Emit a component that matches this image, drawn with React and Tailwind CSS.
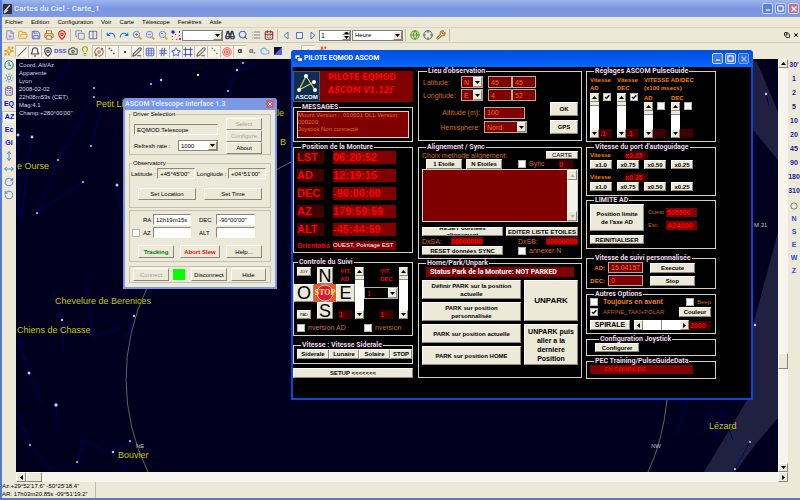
import React, { useState } from 'react';
import {
  FilePlus, FolderOpen, Save, Printer, MapPin, Copy, Columns2, Undo, Redo, ZoomIn, ZoomOut, Search,
  Binoculars, List, CalendarDays, Globe, Crosshair, Wrench, Sparkles, Camera, Lightbulb, Grid3x3,
  Cloud, Orbit, Clock, Sun, MoveVertical, MoveHorizontal, RotateCw, RotateCcw, ClipboardList, PenLine,
  Bell, Dot, Slash, Target, Frame, Star, Minus, Square, X, Hash,
} from 'lucide-react';

const menus = ['Fichier', 'Edition', 'Configuration', 'Voir', 'Carte', 'Télescope', 'Fenêtres', 'Aide'];

const positions = [
  ['LST', '06:20:52'],
  ['AD', '12:19:15'],
  ['DEC', '-90:00:00'],
  ['AZ', '179:59:59'],
  ['ALT', '-45:44:59'],
];

const skyInfo = ['Coord. Alt/Az', 'Apparente', 'Lyon', '2008-02-02', '22h08m53s (CET)', 'Mag:4.1', 'Champ:+280°00\'00"'];

const skyLabels = [
  [96, 107, 'Petit Li'],
  [17, 169, 'e Ourse'],
  [55, 304, 'Chevelure de Berenices'],
  [17, 333, 'Chiens de Chasse'],
  [118, 458, 'Bouvier'],
  [709, 429, 'Lézard'],
  [277, 116, 'le'],
  [280, 145, 'B'],
];

const stars = [
  [94, 88, 1], [94, 97, 1], [18, 135, 1.4], [32, 137, 1.4], [91, 146, 1], [58, 160, 1], [83, 182, 1],
  [117, 185, 1.5], [37, 213, 1], [161, 80, 1.2], [151, 84, 1], [237, 70, 1.2], [243, 63, 1], [228, 91, 1],
  [62, 320, 1.2], [134, 316, 1.2], [29, 373, 1.5], [56, 405, 1.7], [30, 445, 1], [113, 452, 1.2],
  [130, 441, 1], [77, 462, 1], [755, 325, 1.2], [750, 442, 1], [735, 469, 1], [766, 94, 1.2],
];

const lines = [
  '94,97 58,160 37,213', '117,89 102,105 91,146', '17,135 32,137 21,218', '37,213 83,182', '18,135 18,215',
  '70,60 48,98', '117,185 122,220', '161,80 151,84 139,96', '243,63 237,70 228,91 226,98',
  '237,70 250,68 256,62', '62,320 63,352', '62,320 53,290', '86,278 92,337 120,328', '29,373 42,404',
  '18,340 29,373', '56,405 58,425', '17,412 30,445 52,471', '134,316 126,340', '77,462 83,441 113,452 127,471',
  '113,452 130,441', '766,94 769,106', '676,436 688,400', '702,434 712,414 722,410 716,438 726,420 733,440', '735,469 750,442',
];

const rightScale = ["30'", '1', '2', '5', '10', '20', '45', '90', '180', '310'];

const Arrow = ({ dir = 'down' }) => {
  const shapes = { down: '0,1 5,1 2.5,4', up: '0,4 5,4 2.5,1', left: '4,0 4,5 1,2.5', right: '1,0 1,5 4,2.5' };
  return (
    <svg viewBox="0 0 5 5" className="w-[5px] h-[5px]" aria-hidden="true">
      <polygon points={shapes[dir]} fill="currentColor" />
    </svg>
  );
};

const Btn = ({ children, className = '', ...rest }) => (
  <button
    type="button"
    className={`flex items-center justify-center text-center bg-[#ece9d8] text-black border border-t-white border-l-white border-r-[#8c897c] border-b-[#8c897c] whitespace-nowrap ${className}`}
    {...rest}
  >
    {children}
  </button>
);

const eqLegend = "ml-1 text-[#f0d8f0] text-[7px] font-bold font-['Roboto','Liberation_Sans',sans-serif]";

const Group = ({ title, className = '', legendClass = eqLegend, children }) => (
  <fieldset className={`min-w-0 border ${className}`}>
    <legend className={`h-2 px-px leading-[8px] whitespace-nowrap ${legendClass}`}>{title}</legend>
    {children}
  </fieldset>
);

const Tick = ({ label, checked = false, textClass = '', name }) => {
  const [on, setOn] = useState(checked);
  return (
    <label className="flex items-center gap-[3px] leading-[8px] whitespace-nowrap">
      <span className="relative flex">
        <input
          type="checkbox"
          aria-label={name}
          checked={on}
          onChange={() => setOn(!on)}
          className="appearance-none w-[8px] h-[8px] bg-white border border-[#b8b4a8]"
        />
        {on && (
          <svg viewBox="0 0 8 8" className="absolute inset-0 w-2 h-2 pointer-events-none">
            <path d="M2 4 L3.5 5.5 L6.3 2.3" fill="none" stroke="black" strokeWidth="1.4" />
          </svg>
        )}
      </span>
      {label && <span className={textClass}>{label}</span>}
    </label>
  );
};

const Combo = ({ value, name, className = '', selectClass = '' }) => (
  <span className={`relative flex ${className}`}>
    <select aria-label={name} defaultValue={value} className={`appearance-none w-full h-full pl-[2px] leading-none ${selectClass}`}>
      <option value={value}>{value}</option>
    </select>
    <span className="absolute right-px top-px bottom-px w-[9px] bg-[#ece9d8] text-black border border-white border-r-[#8c897c] border-b-[#8c897c] flex items-center justify-center pointer-events-none">
      <Arrow />
    </span>
  </span>
);

const ScrollV = ({ className = '' }) => (
  <div className={`flex flex-col w-[9px] shrink-0 bg-white ${className}`}>
    <Btn className="h-[9px]" aria-label="Haut"><Arrow dir="up" /></Btn>
    <div className="h-1 bg-[#ece9d8] border-b border-[#8c897c]" />
    <div className="flex-1" />
    <Btn className="h-[9px]" aria-label="Bas"><Arrow /></Btn>
  </div>
);

const RedInput = ({ value, name, className = '' }) => (
  <input
    aria-label={name}
    defaultValue={value}
    className={`min-w-0 bg-[#800000] text-[#f07010] border border-[#b8a8a0] px-[2px] text-[7px] leading-none ${className}`}
  />
);

const Readout = ({ children, className = 'bg-[#400000]' }) => (
  <output className={`block text-[#ff0000] font-bold text-[7px] leading-[9px] whitespace-nowrap ${className}`}>{children}</output>
);

const Tool = ({ icon: Icon, color = 'text-[#3050c0]', text, label, pressed }) => (
  <button
    type="button"
    aria-label={label}
    className={`h-3 flex flex-1 items-center justify-center text-[7px] font-bold ${color} ${pressed ? 'bg-[#f6f4ea] border-l border-t border-[#c4c0ac]' : ''}`}
  >
    {Icon ? <Icon size={10} strokeWidth={2.5} /> : text}
  </button>
);

const Sep = () => <span className="w-px h-3 mx-[2px] bg-[#c0bca8]" />;

const TopBar = () => (
  <header>
    <div className="h-[17px] flex items-center gap-[2px] pl-px pr-px bg-gradient-to-b from-[#9db4ee] via-[#7a96df] to-[#7d9ae6]">
      <svg viewBox="0 0 9 10" className="w-[9px] h-[10px]">
        <rect width="9" height="10" fill="#303030" />
        <path d="M1 8 L7 1 M1 9 L5 6" stroke="#d8d8d8" strokeWidth="1.3" />
      </svg>
      <h1 className="flex-1 font-['Roboto','Liberation_Sans',sans-serif] text-[8px] leading-none font-bold text-[#dce6ff]">Cartes du Ciel - Carte_1</h1>
      <WindowButtons closeClass="bg-[#c07080]" baseClass="bg-[#5a80e0]" />
    </div>
    <nav className="h-[11px] flex items-center pl-[2px] gap-[6px] text-[6px] leading-none border-b border-[#d8d4c0]">
      {menus.map((m) => (
        <a key={m} href="#" className="px-px">{m}</a>
      ))}
    </nav>
    <div className="h-[15px] flex items-center pl-px border-b border-[#d0ccb8]">
      <div className="flex w-[65px]">
        <Tool icon={FilePlus} label="Nouveau" color="text-[#9090c8]" />
        <Tool icon={FolderOpen} label="Ouvrir" color="text-[#e0a820]" />
        <Tool icon={Save} label="Enregistrer" color="text-[#6070d0]" />
        <Tool icon={Printer} label="Imprimer" color="text-[#b08030]" />
        <Tool icon={MapPin} label="Position" color="text-[#d01010]" />
      </div>
      <Sep />
      <div className="flex w-[26px]">
        <Tool icon={Copy} label="Copier" color="text-[#8088b8]" />
        <Tool icon={Columns2} label="Colonnes" color="text-[#6878b0]" />
      </div>
      <Sep />
      <div className="flex w-[78px]">
        <Tool icon={Undo} label="Annuler" color="text-[#1068d0]" />
        <Tool icon={Redo} label="Refaire" color="text-[#1068d0]" />
        {['M3 4.5h3M4.5 3v3', 'M3 4.5h3', 'M3 3.5h2'].map((mark) => (
          <button key={mark} type="button" aria-label="Zoom" className="flex-1 flex items-center justify-center">
            <svg viewBox="0 0 10 10" className="w-[10px] h-[10px]">
              <circle cx="4.5" cy="4.5" r="3.2" fill="#d8e4ff" stroke="#8088c0" strokeWidth="1" />
              <path d={mark} stroke="#6070c0" strokeWidth="0.8" />
              <path d="M7 7 L9.3 9.3" stroke="#e0a020" strokeWidth="1.8" />
            </svg>
          </button>
        ))}
        <button type="button" aria-label="Champ" className="flex-1 flex items-center justify-center">
          <svg viewBox="0 0 10 10" className="w-[10px] h-[10px]">
            <circle cx="2" cy="2" r="1.7" fill="#2020ff" />
            <path d="M8 1h1v2H8z M8 5h1v1H8z" fill="#2020ff" />
            <path d="M1 6h1v1H1z M4 4h1v1H4z M1 9h1v1H1z M5 9h1v1H5z M8 8h2v2H8z" fill="#ff2060" />
          </svg>
        </button>
      </div>
      <Combo name="Recherche" value="" className="w-[41px] h-[11px]" selectClass="bg-white border border-[#808080]" />
      <div className="flex w-[52px]">
        <Tool icon={Binoculars} label="Chercher" color="text-[#182048]" />
        <Tool icon={Search} label="Recherche avancée" color="text-[#4060e0]" />
        <Tool icon={List} label="Liste" color="text-[#808080]" />
        <Tool icon={CalendarDays} label="Calendrier" color="text-[#803030]" />
      </div>
      <Sep />
      <div className="flex w-[39px]">
        {['6,1 6,8 2,4.5', '1.5,1.5 7.5,1.5 7.5,7.5 1.5,7.5', '3,1 3,8 7,4.5'].map((p) => (
          <button key={p} type="button" aria-label="Temps" className="flex-1 flex items-center justify-center">
            <svg viewBox="0 0 9 9" className="w-[9px] h-[9px]"><polygon points={p} fill="#f0f4ff" stroke="#5060c0" strokeWidth="0.9" /></svg>
          </button>
        ))}
      </div>
      <div className="flex h-[11px] w-[32px] bg-white border border-[#808080]">
        <input aria-label="Pas" defaultValue="1" className="flex-1 min-w-0 pl-px text-[7px] leading-none" />
        <div className="flex flex-col w-2">
          <Btn className="flex-1 min-h-0 overflow-hidden" aria-label="Plus"><Arrow dir="up" /></Btn>
          <Btn className="flex-1 min-h-0 overflow-hidden" aria-label="Moins"><Arrow /></Btn>
        </div>
      </div>
      <Combo name="Unité" value="Heure" className="w-[51px] h-[11px] ml-px" selectClass="bg-white border border-[#808080] text-[6px]" />
      <Sep />
      <div className="flex w-[39px]">
        <Tool icon={Globe} label="Connexion" color="text-[#50a020]" />
        <Tool icon={Crosshair} label="Centrer" color="text-[#606060]" />
        <Tool icon={Wrench} label="Outils" color="text-[#b07010]" />
      </div>
      <Sep />
      <div className="ml-auto flex gap-[3px] pr-px text-black">
        <Copy size={6} strokeWidth={3} />
        <X size={6} strokeWidth={4} />
      </div>
    </div>
    <div className="h-4 flex items-center pl-px">
      <div className="flex w-[51px]">
        <Tool icon={Sparkles} label="Etoiles" color="text-[#e8a020]" />
        <Tool icon={Slash} label="Comètes" color="text-[#707070]" pressed />
        <Tool icon={Bell} label="Nébuleuses" color="text-[#404040]" pressed />
        <Tool icon={MapPin} label="Objets" color="text-[#303040]" pressed />
      </div>
      <div className="flex w-[51px]">
        <Tool text={<span className="text-[6px]">DSS</span>} label="DSS" />
        <Tool icon={Camera} label="Images" color="text-[#404840]" />
        <Tool icon={Lightbulb} label="Lumière" color="text-[#90b000]" />
        <Tool icon={Orbit} label="Orbites" color="text-[#907050]" pressed />
      </div>
      <div className="flex w-[51px]">
        <Tool text="⋱" label="Astéroïdes" color="text-black" pressed />
        <Tool icon={Dot} label="Comètes proches" color="text-black" pressed />
        <Tool icon={PenLine} label="Voie lactée" color="text-[#505050]" pressed />
        <Tool icon={Grid3x3} label="Grille" color="text-[#6878c8]" pressed />
      </div>
      <div className="flex w-[51px]">
        <Tool icon={Hash} label="Grille équatoriale" color="text-[#5060c0]" pressed />
        <Tool icon={Star} label="Constellations" color="text-[#6878d8]" pressed />
        <Tool icon={Frame} label="Limites" color="text-[#4050e0]" pressed />
        <Tool icon={PenLine} label="Ecliptique" color="text-[#606060]" pressed />
      </div>
      <div className="flex w-[51px]">
        <Tool text="⋱" label="Galaxie" color="text-[#605800]" pressed />
        <Tool icon={Target} label="Marques" color="text-[#f06060]" pressed />
        <Tool text="α" label="Etiquettes" color="text-black" pressed />
        <Tool text="α," label="Noms" color="text-[#606060]" />
      </div>
      <div className="flex w-[26px]">
        <Tool icon={Cloud} label="Ciel" color="text-[#70a8e8]" />
        <button type="button" aria-label="Couleurs" className="flex-1 flex items-center justify-center">
          <svg viewBox="0 0 8 8" className="w-2 h-2"><rect width="8" height="8" fill="#101020" /><path d="M8 0V8H0z" fill="#5060f0" /></svg>
        </button>
      </div>
      <div className="flex w-[40px] ml-1">
        <Tool text="●" label="Planète" color="text-[#7080e0]" />
        <Tool text="▲" label="Horizon" color="text-[#404040]" pressed />
        <Tool icon={Sparkles} label="Rayons" color="text-[#e05030]" />
      </div>
    </div>
  </header>
);

const WindowButtons = ({ baseClass, closeClass }) => (
  <div className="flex gap-[2px] text-white">
    <button type="button" aria-label="Réduire" className={`w-[11px] h-[11px] rounded-[2px] border border-[#c8d8ff] flex items-end justify-center ${baseClass}`}>
      <Minus size={6} strokeWidth={5} />
    </button>
    <button type="button" aria-label="Agrandir" className={`w-[11px] h-[11px] rounded-[2px] border border-[#c8d8ff] flex items-center justify-center ${baseClass}`}>
      <Square size={7} strokeWidth={4} />
    </button>
    <button type="button" aria-label="Fermer" className={`w-[11px] h-[11px] rounded-[2px] border border-[#c8d8ff] flex items-center justify-center ${closeClass}`}>
      <X size={8} strokeWidth={4} />
    </button>
  </div>
);

const LeftBar = () => (
  <aside className="w-[14px] shrink-0 flex flex-col">
    <div className="flex flex-col gap-px pb-px">
      {[[Clock, 'text-[#2080a0]'], [Sun, 'text-[#60a0c0]'], [ClipboardList, 'text-[#7060c0]']].map(([Icon, color], i) => (
        <span key={i} className="flex h-3"><Tool icon={Icon} label="Outil" color={color} /></span>
      ))}
      {['EQ', 'AZ', 'Ec', 'Gl'].map((t) => (
        <span key={t} className="flex h-3"><Tool text={t} label={t} color="text-[#0010c0]" pressed={t === 'AZ'} /></span>
      ))}
      {[MoveVertical, MoveHorizontal, RotateCw, RotateCcw].map((Icon, i) => (
        <span key={i} className="flex h-3"><Tool icon={Icon} label="Orientation" color="text-[#6090e0]" /></span>
      ))}
    </div>
  </aside>
);

const RightBar = () => (
  <aside className="w-3 shrink-0 flex flex-col items-center pt-px text-[7px] font-bold text-[#1818a0] overflow-hidden">
    {rightScale.map((s) => (
      <button key={s} type="button" className="h-[14px] pb-[5px] leading-[9px]">{s}</button>
    ))}
    <button type="button" aria-label="Ciel entier" className="h-3 flex items-center text-[#808080]">
      <svg viewBox="0 0 8 8" className="w-2 h-2"><circle cx="4" cy="4" r="3.2" fill="none" stroke="currentColor" /></svg>
    </button>
    {['N', 'S', 'E', 'W', 'Z'].map((s) => (
      <button key={s} type="button" className="h-[13px] leading-[13px] text-[#3048e0]">{s}</button>
    ))}
  </aside>
);

const Sky = () => (
  <main className="relative flex-1 min-w-0 bg-[#00001e] overflow-hidden">
    <svg className="absolute inset-0 w-full h-full font-['Liberation_Sans',Arial,sans-serif]">
      <g transform="translate(-16 -59)">
        <path d="M753 61 L757 62 L778 112 V160 L753 130z" fill="#202040" />
        <path d="M778 232 L772 255 L753 325 V390 L728 432 L704 472 H735 L755 445 L778 418z" fill="#202040" />
        {lines.map((p) => (
          <polyline key={p} points={p} fill="none" stroke="#000070" strokeWidth="1" />
        ))}
        <path d="M147 288 A208 208 0 0 0 148 472 M667 400 Q663 440 648 472 M276 170 L291 162" fill="none" stroke="#606068" />
        {stars.map(([x, y, r]) => (
          <circle key={`${x}-${y}`} cx={x} cy={y} r={r} fill="#c8c8f8" />
        ))}
        <rect x="197" y="74" width="2" height="2" fill="#ffff00" />
        {skyLabels.map(([x, y, t]) => (
          <text key={t} x={x} y={y} fontSize="9" fill="#c8c800">{t}</text>
        ))}
        <text x="136" y="448" fontSize="6" fill="#c0c0c0">NE</text>
        <text x="651" y="448" fontSize="6" fill="#c0c0c0">NW</text>
        <text x="754" y="227" fontSize="6" fill="#c0c0c0">M 31</text>
      </g>
    </svg>
    <ul className="relative pl-[3px] pt-[2px] text-[6px] leading-[8px] text-[#d8d8e8]">
      {skyInfo.map((t) => (
        <li key={t}>{t}</li>
      ))}
    </ul>
  </main>
);

const field = 'min-w-0 h-[11px] border border-[#8c897c] border-r-white border-b-white px-[2px] text-[6px] leading-none';

const TelescopeWindow = () => (
  <section className="absolute left-[121px] top-[98px] w-[154px] bg-[#ece9d8] border-2 border-t-0 border-[#7b98e6] rounded-t-[3px] pb-1 text-[7px] leading-none">
    <div className="h-3 flex items-center justify-between bg-[#7b98e6] pr-px">
      <h2 className="font-['Roboto','Liberation_Sans',sans-serif] text-[7px] font-bold text-[#dce6ff] whitespace-nowrap">ASCOM Telescope Interface 1.3</h2>
      <button type="button" aria-label="Fermer" className="w-2 h-2 bg-[#c86070] text-white flex items-center justify-center rounded-[1px]">
        <X size={6} strokeWidth={4} />
      </button>
    </div>
    <div className="px-1">
      <Group title="Driver Selection" className="border-[#c4c0b0]" legendClass="ml-[2px] text-[6px]">
        <div className="flex justify-between pl-1 pr-2">
          <div className="flex flex-col gap-[5px] pt-[6px] w-[84px]">
            <input aria-label="Driver" readOnly value="EQMOD.Telescope" className={field} />
            <div className="flex items-center justify-between text-[6px]">
              <span>Refresh rate :</span>
              <Combo name="Refresh rate" value="1000" className="w-[40px] h-[11px]" selectClass="bg-white border border-[#8c897c]" />
            </div>
          </div>
          <div className="flex flex-col w-9 text-[6px]">
            <Btn className="h-3" disabled><span className="text-[#a8a490]">Select</span></Btn>
            <Btn className="h-3" disabled><span className="text-[#a8a490]">Configure</span></Btn>
            <Btn className="h-3">About</Btn>
          </div>
        </div>
      </Group>
      <Group title="Observatory" className="border-[#c4c0b0] mt-1 pb-[7px]" legendClass="ml-[2px] text-[6px]">
        <div className="flex items-center justify-between pl-px pr-1 pt-px text-[6px]">
          <label htmlFor="lat" className="whitespace-nowrap">Latitude :</label>
          <input id="lat" readOnly value={'+45°45\'00"'} className={`${field} w-[38px]`} />
          <label htmlFor="lon" className="whitespace-nowrap">Longitude :</label>
          <input id="lon" readOnly value={'+04°51\'00"'} className={`${field} w-[38px]`} />
        </div>
        <div className="flex gap-2 pl-2 pr-2 pt-[9px] text-[6px]">
          <Btn className="h-3 flex-1">Set Location</Btn>
          <Btn className="h-3 flex-1">Set Time</Btn>
        </div>
      </Group>
      <div className="mt-[2px] border border-[#c4c0b0] pt-[3px] pb-[3px]">
        <div className="grid grid-cols-[9px_12px_38px_25px_39px] gap-y-[2px] items-center pl-[2px] text-[6px]">
          <span />
          <label htmlFor="ra" className="pl-[2px]">RA</label>
          <input id="ra" defaultValue="12h19m15s" className={`${field} bg-white`} />
          <label htmlFor="dec" className="pl-2">DEC</label>
          <input id="dec" defaultValue={'-90°00\'00"'} className={`${field} bg-white`} />
          <Tick name="AZ / ALT" />
          <label htmlFor="az" className="pl-[2px]">AZ</label>
          <input id="az" className={`${field} bg-white`} />
          <label htmlFor="alt" className="pl-2">ALT</label>
          <input id="alt" className={`${field} bg-white`} />
        </div>
        <div className="flex justify-between px-2 pt-[7px] text-[6px]">
          <Btn className="h-[13px] w-9"><b className="text-[#008020]">Tracking</b></Btn>
          <Btn className="h-[13px] w-10"><b className="text-[#ff0000]">Abort Slew</b></Btn>
          <Btn className="h-[13px] w-9">Help...</Btn>
        </div>
      </div>
      <div className="mt-1 border border-[#c4c0b0] flex items-center pl-[3px] pr-1 py-px text-[6px]">
        <Btn className="h-[13px] w-[37px]" disabled><span className="text-[#a8a490]">Connect</span></Btn>
        <span className="w-3 h-[11px] ml-1 bg-[#00ff00]" />
        <Btn className="h-[13px] w-9 ml-[6px]">Disconnect</Btn>
        <Btn className="h-[13px] w-9 ml-1">Hide</Btn>
      </div>
    </div>
  </section>
);

const AscomLogo = () => (
  <div className="w-[27px] h-[31px] bg-[#102c50] border border-[#405878] flex flex-col items-center justify-between">
    <svg viewBox="0 0 25 22" className="w-[25px] h-[22px]">
      <path d="M5 18 L12 4 L21 18 M5 18 L20 10" fill="none" stroke="#c8d850" strokeWidth="1.2" />
      <circle cx="12" cy="4" r="2" fill="white" />
      <circle cx="5" cy="18" r="2" fill="white" />
      <circle cx="20" cy="10" r="2" fill="white" />
      <circle cx="21" cy="18" r="2" fill="white" />
    </svg>
    <span className="text-[6px] leading-[7px] font-bold text-white">ASCOM</span>
  </div>
);

const SpeedHead = ({ axis }) => (
  <p className="text-[6px] leading-[8px] font-bold text-[#ff0000]">VIT.<br />{axis}</p>
);

const Tracking = () => (
  <Group title="Controle du Suivi" className="border-[#d4d0c8] mt-[5px] pb-[3px]">
    <div className="flex pt-px">
      <div className="grid grid-cols-[20px_22px_19px] grid-rows-[17px_18px_17px] justify-items-center">
        <Btn className="w-[14px] h-[9px] text-[4px]">JOY</Btn>
        <Btn className="w-4 h-full text-[18px] leading-none">N</Btn>
        <SpeedHead axis="AD" />
        <Btn className="w-full h-full text-[18px] leading-none">O</Btn>
        <button type="button" className="relative w-full h-full bg-[#e85820]">
          <svg viewBox="0 0 22 18" className="absolute inset-0 w-full h-full">
            <circle cx="11" cy="9" r="8" fill="#d81848" stroke="#f8d8c0" strokeWidth="1" />
          </svg>
          <span className="relative block font-['Liberation_Serif',serif] font-bold text-[8px] leading-none text-[#ffe860]">STOP</span>
        </button>
        <Btn className="w-full h-full text-[18px] leading-none">E</Btn>
        <Btn className="w-[14px] h-[9px] text-[4px] self-end">PAD</Btn>
        <Btn className="w-4 h-full text-[18px] leading-none">S</Btn>
        <Readout className="bg-[#400000] w-[13px] self-end">1</Readout>
      </div>
      <ScrollV />
      <div className="flex flex-col justify-between items-end w-[34px]">
        <div className="w-[18px] h-[17px]"><SpeedHead axis="DEC" /></div>
        <Combo name="Vitesse" value="1" className="w-full h-3" selectClass="bg-black text-[#ff0000] border border-[#b8b4a8] text-[7px]" />
        <div className="h-[17px] w-[18px] flex items-end"><Readout className="bg-[#400000] w-[13px]">1</Readout></div>
      </div>
      <ScrollV className="ml-px" />
    </div>
    <div className="grid grid-cols-[67px_1fr] pl-[3px] pt-[5px] text-[7px]">
      <Tick label="nversion AD" textClass="text-[#c07060]" />
      <Tick label="nversion" textClass="text-[#c06820]" />
    </div>
  </Group>
);

const MountColumn = () => (
  <div className="w-[120px] pt-1">
    <div className="flex">
      <AscomLogo />
      <div className="flex-1 bg-[#800000] text-[#ff0000] font-['DejaVu_Sans',sans-serif] font-bold text-[8px] leading-[13px] pl-2">
        PILOTE EQMOD<br /><i>ASCOM V1.12f</i>
      </div>
    </div>
    <Group title="MESSAGES" className="border-[#d4d0c8] mt-px px-[3px] pb-[3px]">
      <textarea
        aria-label="Messages"
        readOnly
        value={'Mount Version :  010601 DLL Version:\n000200\nJoystick Non connecté'}
        className="block w-full h-[27px] resize-none overflow-hidden bg-[#800000] border border-[#e0d0d0] text-[#e07020] text-[6px] leading-[7px]"
      />
    </Group>
    <Group title="Position de la Monture" className="border-[#d4d0c8] mt-px pb-[2px] pl-[3px]">
      <dl className="grid grid-cols-[27px_63px] gap-x-[9px] gap-y-[5px] text-[11px] leading-[13px] font-bold text-[#ff0000]">
        {positions.map(([k, v]) => (
          <React.Fragment key={k}>
            <dt className="bg-[#400000]">{k}</dt>
            <dd className="bg-[#800000]">{v}</dd>
          </React.Fragment>
        ))}
        <dt className="text-[7px] leading-[9px]">Orientatio</dt>
        <dd className="text-[6px] leading-[9px] bg-[#800000] text-white font-normal whitespace-nowrap">OUEST, Pointage EST</dd>
      </dl>
    </Group>
    <Tracking />
    <Group title="Vitesse : Vitesse Siderale" className="border-[#d4d0c8] mt-[5px] pb-1 pl-[3px]">
      <div className="flex text-[6px] font-bold leading-none">
        <Btn className="h-[10px] w-8">Siderale</Btn>
        <Btn className="h-[10px] w-[30px]">Lunaire</Btn>
        <Btn className="h-[10px] w-[31px]">Solaire</Btn>
        <Btn className="h-[10px] flex-1">STOP</Btn>
      </div>
    </Group>
    <Btn className="w-full h-[10px] mt-1 text-[6px] font-bold">SETUP &lt;&lt;&lt;&lt;&lt;&lt;&lt;</Btn>
  </div>
);

const SiteColumn = () => (
  <div className="w-[164px] text-[7px] leading-none text-[#d07018]">
    <Group title="Lieu d'observation" className="border-[#d4d0c8] pl-1 pr-[3px] pb-[6px]">
      {[['Latitude:', 'N', '45', '45'], ['Longitude:', 'E', '4', '52']].map(([label, dir, deg, min]) => (
        <div key={label} className="flex items-center pt-px h-[13px]">
          <span className="w-[38px]">{label}</span>
          <Combo name={label} value={dir} className="w-[22px] h-3" selectClass="bg-[#800000] text-[#f07010] border border-[#b8a8a0]" />
          <RedInput name={`${label} degrés`} value={deg} className="w-6 h-3 ml-[5px]" />
          <RedInput name={`${label} minutes`} value={min} className="w-6 h-3" />
        </div>
      ))}
      <div className="flex justify-between pt-px">
        <div className="grid grid-cols-[57px_43px] gap-x-1 gap-y-px items-center pt-1">
          <label htmlFor="altitude" className="text-right">Altitude (m):</label>
          <input id="altitude" defaultValue="100" className="w-[41px] h-3 bg-[#800000] text-[#f07010] border border-[#b8a8a0] px-[2px]" />
          <span className="text-right">Hemisphere:</span>
          <Combo name="Hemisphere" value="Nord" className="h-3" selectClass="bg-[#800000] text-[#f07010] border border-[#b8a8a0]" />
        </div>
        <div className="flex flex-col gap-1 w-7 text-[6px] font-bold">
          <Btn className="h-[14px]">OK</Btn>
          <Btn className="h-[14px]">GPS</Btn>
        </div>
      </div>
    </Group>
    <Group title="Alignement / Sync" className="border-[#d4d0c8] mt-[2px] px-[3px] pb-[3px]">
      <div className="flex items-center justify-between h-2">
        <span>Choix  methode alignement:</span>
        <Btn className="w-8 h-2 text-[6px]">CARTE</Btn>
      </div>
      <div className="flex items-center pl-1 pr-[5px] text-[7px]">
        <Btn className="w-9 h-[10px] text-[6px] font-bold">1 Etoile</Btn>
        <Btn className="w-9 h-[10px] ml-1 text-[6px] font-bold">N Etoiles</Btn>
        <span className="ml-4"><Tick label="Sync" /></span>
        <Readout className="bg-[#400000] w-[14px] ml-auto">0</Readout>
      </div>
      <div className="flex h-[53px] bg-[#800000] border border-[#d4d0c8]">
        <div className="flex-1" />
        <div className="w-[10px] bg-[#f4f2ea] flex flex-col justify-between">
          <Btn className="h-[10px]" aria-label="Haut"><span className="text-[#b8b4a8]"><Arrow dir="up" /></span></Btn>
          <Btn className="h-[10px]" aria-label="Bas"><span className="text-[#b8b4a8]"><Arrow /></span></Btn>
        </div>
      </div>
      <div className="grid grid-cols-[81px_72px] justify-between items-center gap-y-px pt-[5px]">
        <Btn className="h-[9px] text-[6px] leading-[7px] font-bold overflow-hidden"><span>RESET données<br />alignement</span></Btn>
        <Btn className="h-[9px] text-[6px] font-bold">EDITER  LISTE ETOILES</Btn>
        <div className="flex h-2 items-center justify-between pr-5">
          <span>DxSA:</span>
          <Readout className="bg-[#800000] w-8 h-2 leading-[8px]">00000000</Readout>
        </div>
        <div className="flex h-2 items-center justify-between pl-3">
          <span>DxSB:</span>
          <Readout className="bg-[#800000] w-8 h-2 leading-[8px]">00000000</Readout>
        </div>
        <Btn className="h-[9px] text-[6px] font-bold">RESET données SYNC</Btn>
        <span className="pl-3"><Tick label="annexer N" /></span>
      </div>
    </Group>
    <Group title="Home/Park/Unpark" className="border-[#d4d0c8] px-[3px] pb-3">
      <p className="mx-1 pl-1 h-[10px] leading-[10px] bg-[#800000] text-white font-bold font-['Roboto','Liberation_Sans',sans-serif] text-[7px] whitespace-nowrap">Status Park de la Monture: NOT PARKED</p>
      <div className="grid grid-cols-[99px_54px] justify-between pt-[3px] font-bold leading-[8px]">
        <div className="flex flex-col gap-[3px] text-[6px]">
          <Btn className="h-[19px]">Définir PARK sur la position<br />actuelle</Btn>
          <Btn className="h-[19px]">PARK sur position<br />personnalisée</Btn>
          <Btn className="h-[19px]">PARK sur position actuelle</Btn>
          <Btn className="h-[19px]">PARK sur position HOME</Btn>
        </div>
        <div className="flex flex-col gap-[3px]">
          <Btn className="h-[41px] text-[8px]">UNPARK</Btn>
          <Btn className="h-[41px] leading-[9px]">UNPARK puis<br />aller a la<br />derniere<br />Position</Btn>
        </div>
      </div>
    </Group>
  </div>
);

const GuideSlider = ({ name, value, checked, className }) => (
  <div className={`flex ${className}`}>
    <ScrollV />
    <div className="flex flex-col justify-between">
      <span className="pl-1"><Tick name={name} checked={checked} /></span>
      <Readout className="bg-[#400000] w-[13px] h-[9px] pl-px">{value}</Readout>
    </div>
  </div>
);

const GuideColumn = () => (
  <div className="w-[130px] -ml-px text-[6px] leading-[8px] text-[#f08010] font-bold">
    <Group title="Réglages ASCOM PulseGuide" className="border-[#d4d0c8] pl-[3px] pb-[3px]">
      <div className="flex pt-px">
        {['AD', 'DEC'].map((axis) => (
          <div key={axis} className="w-[27px]">
            Vitesse<br />{axis}
            <GuideSlider name={`Vitesse ${axis}`} value=".1" checked className="h-[45px] mt-px" />
          </div>
        ))}
        <div>
          VITESSE AD/DEC<br />(x100 msecs)
          <div className="flex pt-[2px]">
            {['AD', 'DEC'].map((axis) => (
              <div key={axis} className="w-[27px]">
                {axis}
                <GuideSlider name={`Durée ${axis}`} value="" className="h-9" />
              </div>
            ))}
          </div>
        </div>
      </div>
    </Group>
    <Group title="Vitesse du port d'autoguidage" className="border-[#d4d0c8] mt-px pl-[3px] pb-1">
      <div className="flex flex-col gap-1">
        {[1, 2].map((row) => (
          <div key={row}>
            <div className="flex">
              <span className="w-[35px]">Vitesse</span>
              <Readout className="bg-[#400000] w-[23px]">x0.25</Readout>
            </div>
            <div className="flex gap-[5px]">
              {['x1.0', 'x0.75', 'x0.50', 'x0.25'].map((s) => (
                <Btn key={s} className="w-[22px] h-[9px]">{s}</Btn>
              ))}
            </div>
          </div>
        ))}
      </div>
    </Group>
    <Group title="LIMITE AD" className="border-[#d4d0c8] pl-[3px] pb-1">
      <div className="flex gap-1">
        <div className="flex flex-col gap-1 w-[54px]">
          <Btn className="h-[27px]">Position limite<br />de l'axe AD</Btn>
          <Btn className="h-[9px]">REINITIALISER</Btn>
        </div>
        <div className="grid grid-cols-[18px_31px] auto-rows-[9px] gap-y-1 pt-1 text-[6px] leading-[9px] font-normal text-[#c06820]">
          <span>Ouest</span>
          <Readout className="bg-[#800000] pl-px">505500</Readout>
          <span>Est:</span>
          <Readout className="bg-[#800000] pl-px">A2A000</Readout>
        </div>
      </div>
    </Group>
    <Group title="Vitesse de suivi personnalisée" className="border-[#d4d0c8] mt-[5px] pl-[3px] pb-[2px]">
      <div className="grid grid-cols-[15px_35px_49px] gap-x-[3px] gap-y-[2px] items-center">
        <span className="text-right">AD:</span>
        <RedInput name="AD" value="15.04157" className="h-[11px] font-normal" />
        <Btn className="h-[10px] ml-1">Execute</Btn>
        <span className="text-right">DEC:</span>
        <RedInput name="DEC" value="0" className="h-[11px] font-normal" />
        <Btn className="h-[10px] ml-1">Stop</Btn>
      </div>
    </Group>
    <Group title="Autres Options" className="border-[#d4d0c8] mt-px pl-[3px] pr-1 pb-[3px]">
      <div className="flex justify-between h-2 items-center">
        <Tick label="Toujours en avant" textClass="pl-[2px] text-[7px]" />
        <Tick label="Beep" textClass="font-normal text-[#c06820]" />
      </div>
      <div className="flex justify-between items-center h-[11px]">
        <Tick label="AFFINE_TAKI+POLAR" checked textClass="pl-[2px] font-normal text-[#c06820]" />
        <Btn className="w-8 h-[10px]">Couleur</Btn>
      </div>
      <div className="flex items-center pt-[3px]">
        <Btn className="w-10 h-[10px] text-[7px]">SPIRALE</Btn>
        <div className="flex flex-1 h-[10px] ml-1 bg-white">
          <Btn className="w-[9px]" aria-label="Gauche"><Arrow dir="left" /></Btn>
          <div className="flex-1" />
          <div className="w-px bg-[#8c897c]" />
          <div className="flex-1" />
          <Btn className="w-[9px]" aria-label="Droite"><Arrow dir="right" /></Btn>
        </div>
        <Readout className="bg-[#400000] w-[22px] pl-px">2000</Readout>
      </div>
    </Group>
    <Group title="Configuration Joystick" className="border-[#d4d0c8] mt-px pl-2 pb-[3px]">
      <Btn className="w-11 h-[9px]">Configurer</Btn>
    </Group>
    <Group title="PEC Training/PulseGuideData" className="border-[#d4d0c8] mt-px pl-[3px] pb-1">
      <p className="w-[103px] h-[9px] leading-[9px] pl-[14px] bg-[#800000] text-[#ff0000]">EN COURS DE</p>
    </Group>
  </div>
);

const PilotWindow = () => (
  <section className="absolute left-[289px] top-[50px] w-[462px] bg-black border-2 border-t-0 border-[#0848e0] rounded-t-[4px]">
    <div className="h-[17px] -mx-[2px] px-1 flex items-center gap-px rounded-t-[4px] bg-gradient-to-b from-[#0850d8] via-[#0058f0] to-[#0868ff]">
      <svg viewBox="0 0 8 7" className="w-2 h-[7px]">
        <rect x="0" y="0" width="5" height="4" fill="#ffffff" stroke="#202020" strokeWidth="0.6" />
        <rect x="2.5" y="2.5" width="5" height="4" fill="#e8e8e8" stroke="#202020" strokeWidth="0.6" />
      </svg>
      <h2 className="flex-1 font-['Roboto','Liberation_Sans',sans-serif] text-[7px] leading-none font-bold text-white">PILOTE EQMOD ASCOM</h2>
      <WindowButtons baseClass="bg-[#3878f0]" closeClass="bg-[#5878c8] opacity-60" />
    </div>
    <div className="flex gap-[5px] pb-[19px]">
      <MountColumn />
      <SiteColumn />
      <GuideColumn />
    </div>
  </section>
);

const App = () => {
  return (
    <div className="relative h-screen flex flex-col overflow-hidden bg-[#ece9d8] text-black font-['Liberation_Sans',Arial,sans-serif] border-l-2 border-b-2 border-[#5078d8]">
      <TopBar />
      <div className="flex flex-1 min-h-0">
        <LeftBar />
        <div className="flex flex-1 min-w-0 flex-col">
          <div className="flex flex-1 min-h-0">
            <Sky />
            <div className="w-[10px] flex flex-col bg-[#f6f4ec]">
              <Btn className="h-[9px]" aria-label="Haut"><Arrow dir="up" /></Btn>
              <div className="flex-[283]" />
              <div className="h-4 bg-[#ece9d8] border border-white border-b-[#8c897c] border-r-[#8c897c]" />
              <div className="flex-[93]" />
              <Btn className="h-[9px]" aria-label="Bas"><Arrow /></Btn>
            </div>
          </div>
          <div className="h-[10px] flex bg-[#f6f4ec]">
            <Btn className="w-[10px]" aria-label="Gauche"><Arrow dir="left" /></Btn>
            <div className="w-4 bg-[#ece9d8] border border-white border-b-[#8c897c] border-r-[#8c897c]" />
            <div className="flex-1" />
            <Btn className="w-[10px]" aria-label="Droite"><Arrow dir="right" /></Btn>
          </div>
        </div>
        <RightBar />
      </div>
      <footer className="h-4 flex text-[6px] leading-[8px]">
        <p className="w-[94px] border-r border-[#c0bca8] whitespace-nowrap">
          Az:+29°52'17.6" -50°25'18.4"<br />AR: 17h03m20.85s -09°51'19.2"
        </p>
      </footer>
      <TelescopeWindow />
      <PilotWindow />
    </div>
  );
};

export default App;
